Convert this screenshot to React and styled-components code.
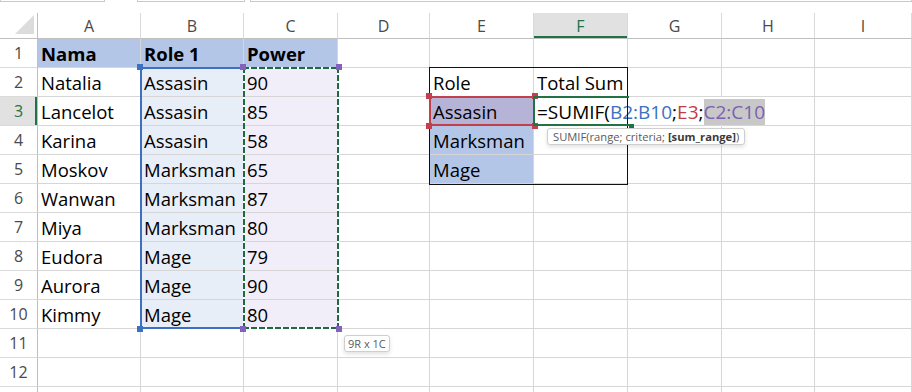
import React from "react";
import styled, { createGlobalStyle } from "styled-components";

const GlobalStyle = createGlobalStyle`
  html, body {
    margin: 0;
    padding: 0;
    background: #fff;
    overflow: hidden;
  }
  body {
    font-family: "Open Sans", "Liberation Sans", sans-serif;
  }
`;

const COLS = ["A", "B", "C", "D", "E", "F", "G", "H", "I"];
const ROW_COUNT = 13;
const LABELLED_ROWS = 12;
const HEADER_FILL = "#b4c6e7";
const GREEN = "#217346";

const table = [
  ["Nama", "Role 1", "Power"],
  ["Natalia", "Assasin", "90"],
  ["Lancelot", "Assasin", "85"],
  ["Karina", "Assasin", "58"],
  ["Moskov", "Marksman", "65"],
  ["Wanwan", "Marksman", "87"],
  ["Miya", "Marksman", "80"],
  ["Eudora", "Mage", "79"],
  ["Aurora", "Mage", "90"],
  ["Kimmy", "Mage", "80"],
];

const side = {
  E2: { text: "Role" },
  F2: { text: "Total Sum" },
  E3: { text: "Assasin", fill: "#b6b4d6" },
  E4: { text: "Marksman", fill: HEADER_FILL },
  E5: { text: "Mage", fill: HEADER_FILL },
};

// what sits in a given cell (row is 1-based, col is index into COLS)
const cellAt = (row, col) => {
  const key = COLS[col] + row;
  if (side[key]) return side[key];
  if (col < 3 && row <= table.length) {
    const text = table[row - 1][col];
    if (row === 1) return { text, bold: true, fill: HEADER_FILL };
    if (col === 1) return { text, fill: "#e8eef8" };
    if (col === 2) return { text, fill: "#f2eef9" };
    return { text };
  }
  return { text: "" };
};

export default function App() {
  const cells = [];
  for (let r = 1; r <= ROW_COUNT; r++) {
    for (let c = 0; c < COLS.length; c++) {
      const key = COLS[c] + r;
      if (key === "F3") {
        cells.push(
          <Cell key={key} $row={r + 1} $col={c + 2} $open>
            <Formula>
              =SUMIF(<Ref $color="#3b70c2">B2:B10</Ref>;
              <Ref $color="#c23b47">E3</Ref>;
              <Ref $color="#7c5fb1" $picked>C2:C10</Ref>
            </Formula>
          </Cell>
        );
        continue;
      }
      const { text, bold, fill } = cellAt(r, c);
      cells.push(
        <Cell
          key={key}
          $row={r + 1}
          $col={c + 2}
          $bold={bold}
          $fill={fill}
          $open={key === "G3"}
        >
          {text}
        </Cell>
      );
    }
  }

  return (
    <>
      <GlobalStyle />
      <TopBar>
        <BarBox $w="105px" />
        <BarBox $w="108px" $gap="32px" />
        <BarBox $gap="5px" $grow />
      </TopBar>
      <Sheet>
        <Corner>
          <svg width="19" height="19" viewBox="0 0 19 19">
            <polygon points="19,0 19,19 0,19" fill="#dcdcdc" />
          </svg>
        </Corner>
        {COLS.map((name, i) => (
          <ColHead key={name} $col={i + 2} $active={name === "F"}>
            {name}
          </ColHead>
        ))}
        {Array.from({ length: ROW_COUNT }, (_, i) => (
          <RowHead key={i} $row={i + 2} $active={i + 1 === 3}>
            {i < LABELLED_ROWS ? i + 1 : ""}
          </RowHead>
        ))}
        {cells}

        <Outline $rows="3 / 7" $cols="6 / 8" />

        <Range $rows="3 / 12" $cols="3 / 4" $color="#3b70c2">
          <Handle $at="tl" $color="#3b70c2" />
          <Handle $at="bl" $color="#3b70c2" />
        </Range>

        <Marquee $rows="3 / 12" $cols="4 / 5">
          <Handle $at="tl" $color="#8262bd" $edge="2px" />
          <Handle $at="tr" $color="#8262bd" $edge="2px" />
          <Handle $at="bl" $color="#8262bd" $edge="2px" />
          <Handle $at="br" $color="#8262bd" $edge="2px" />
          <SizeTip>9R x 1C</SizeTip>
        </Marquee>

        <Range $rows="4 / 5" $cols="6 / 7" $color="#c23f4c" $all>
          <Handle $at="tl" $color="#c23f4c" />
          <Handle $at="tr" $color="#c23f4c" />
          <Handle $at="bl" $color="#c23f4c" />
          <Handle $at="br" $color="#c23f4c" />
        </Range>

        <Active $rows="4 / 5" $cols="7 / 8">
          <Handle $at="br" $color={GREEN} $size="5px" />
          <ArgTip>
            SUMIF(range; criteria; <b>[sum_range]</b>)
          </ArgTip>
        </Active>
      </Sheet>
    </>
  );
}

const TopBar = styled.div`
  display: flex;
  align-items: flex-start;
  height: 13px;
`;

const BarBox = styled.div`
  box-sizing: border-box;
  width: ${(p) => p.$w || "auto"};
  flex: ${(p) => (p.$grow ? 1 : "none")};
  margin-left: ${(p) => p.$gap || 0};
  height: 2px;
  border: 1px solid #c9c9c9;
  border-top: none;
`;

const Sheet = styled.div`
  display: grid;
  grid-template-columns: 38px 103px 103px 94px 92px 104px 94px 94px 93px 1fr;
  grid-template-rows: 26px repeat(${ROW_COUNT}, 29px);
  font-family: "Open Sans", "Liberation Sans", sans-serif;
`;

const Corner = styled.div`
  grid-row: 1;
  grid-column: 1;
  box-sizing: border-box;
  border-right: 1px solid #bfbfbf;
  border-bottom: 1px solid #bfbfbf;
  display: flex;
  align-items: flex-end;
  justify-content: flex-end;
  padding: 0 3px 4px 0;
`;

const ColHead = styled.div`
  grid-row: 1;
  grid-column: ${(p) => p.$col};
  box-sizing: border-box;
  border-right: 1px solid #dadada;
  border-bottom: 1px solid #bfbfbf;
  background: ${(p) => (p.$active ? "#e1e1e1" : "#fff")};
  box-shadow: ${(p) => (p.$active ? `inset 0 -2px 0 ${GREEN}` : "none")};
  color: ${(p) => (p.$active ? GREEN : "#4a4a4a")};
  text-align: center;
  font-size: 16px;
  line-height: 26px;
`;

const RowHead = styled.div`
  grid-row: ${(p) => p.$row};
  grid-column: 1;
  box-sizing: border-box;
  border-right: 1px solid #bfbfbf;
  border-bottom: 1px solid #dadada;
  background: ${(p) => (p.$active ? "#e1e1e1" : "#fff")};
  box-shadow: ${(p) => (p.$active ? `inset -2px 0 0 ${GREEN}` : "none")};
  color: ${(p) => (p.$active ? GREEN : "#4a4a4a")};
  text-align: center;
  font-size: 16px;
  line-height: 28px;
`;

const Cell = styled.div`
  grid-row: ${(p) => p.$row};
  grid-column: ${(p) => p.$col};
  box-sizing: border-box;
  border-right: 1px solid ${(p) => (p.$open ? "transparent" : "#d6d6d6")};
  border-bottom: 1px solid #d6d6d6;
  background: ${(p) => p.$fill || "transparent"};
  padding: 2px 0 0 3px;
  font-size: 18.5px;
  line-height: 26px;
  font-weight: ${(p) => (p.$bold ? 700 : 400)};
  color: #000;
  white-space: nowrap;
  min-width: 0;
`;

const Formula = styled.span`
  background: #fff;
  font-size: 19px;
`;

const Ref = styled.span`
  color: ${(p) => p.$color};
  background: ${(p) => (p.$picked ? "#c8c8c8" : "transparent")};
`;

const Overlay = styled.div`
  grid-row: ${(p) => p.$rows};
  grid-column: ${(p) => p.$cols};
  position: relative;
  box-sizing: border-box;
  margin: -1px -1px 0 -1px;
  pointer-events: none;
`;

const Outline = styled(Overlay)`
  z-index: 2;
  margin: -1px 0 -1px -1px;
  border: 1px solid #111;
`;

const Range = styled(Overlay)`
  z-index: 3;
  border: 2px solid ${(p) => p.$color};
  border-right-color: ${(p) => (p.$all ? p.$color : "transparent")};
`;

const ant = (dir) =>
  `repeating-linear-gradient(${dir}, #1d6a3f 0 6px, #fff 6px 8px)`;

const Marquee = styled(Overlay)`
  z-index: 4;
  background: ${ant("90deg")} top / 100% 2px no-repeat,
    ${ant("90deg")} bottom / 100% 2px no-repeat,
    ${ant("180deg")} left / 2px 100% no-repeat,
    ${ant("180deg")} right / 2px 100% no-repeat;
`;

const Active = styled(Overlay)`
  z-index: 5;
  border: 2px solid ${GREEN};
  border-right: none;
`;

const corners = {
  tl: (o) => `top: ${o}; left: ${o};`,
  tr: (o) => `top: ${o}; right: ${o};`,
  bl: (o) => `bottom: ${o}; left: ${o};`,
  br: (o) => `bottom: ${o}; right: ${o};`,
};

const Handle = styled.span`
  position: absolute;
  ${(p) => corners[p.$at](p.$edge ? "-3px" : "-5px")}
  width: ${(p) => p.$size || "6px"};
  height: ${(p) => p.$size || "6px"};
  background: ${(p) => p.$color};
`;

const Tip = styled.div`
  position: absolute;
  box-sizing: border-box;
  background: #fff;
  border: 1px solid #cfcfcf;
  border-radius: 3px;
  box-shadow: 0 2px 4px rgba(0, 0, 0, 0.12);
  color: #5a5a5a;
  white-space: nowrap;
  font-family: "Open Sans", "Liberation Sans", sans-serif;
`;

const ArgTip = styled(Tip)`
  top: calc(100% + 4px);
  left: 12px;
  height: 17px;
  padding: 0 5px;
  font-size: 11.2px;
  line-height: 15px;

  b {
    color: #3a3a3a;
    font-weight: 700;
  }
`;

const SizeTip = styled(Tip)`
  top: calc(100% + 6px);
  left: calc(100% + 5px);
  height: 17px;
  padding: 0 3px;
  font-size: 11px;
  line-height: 15px;
`;
